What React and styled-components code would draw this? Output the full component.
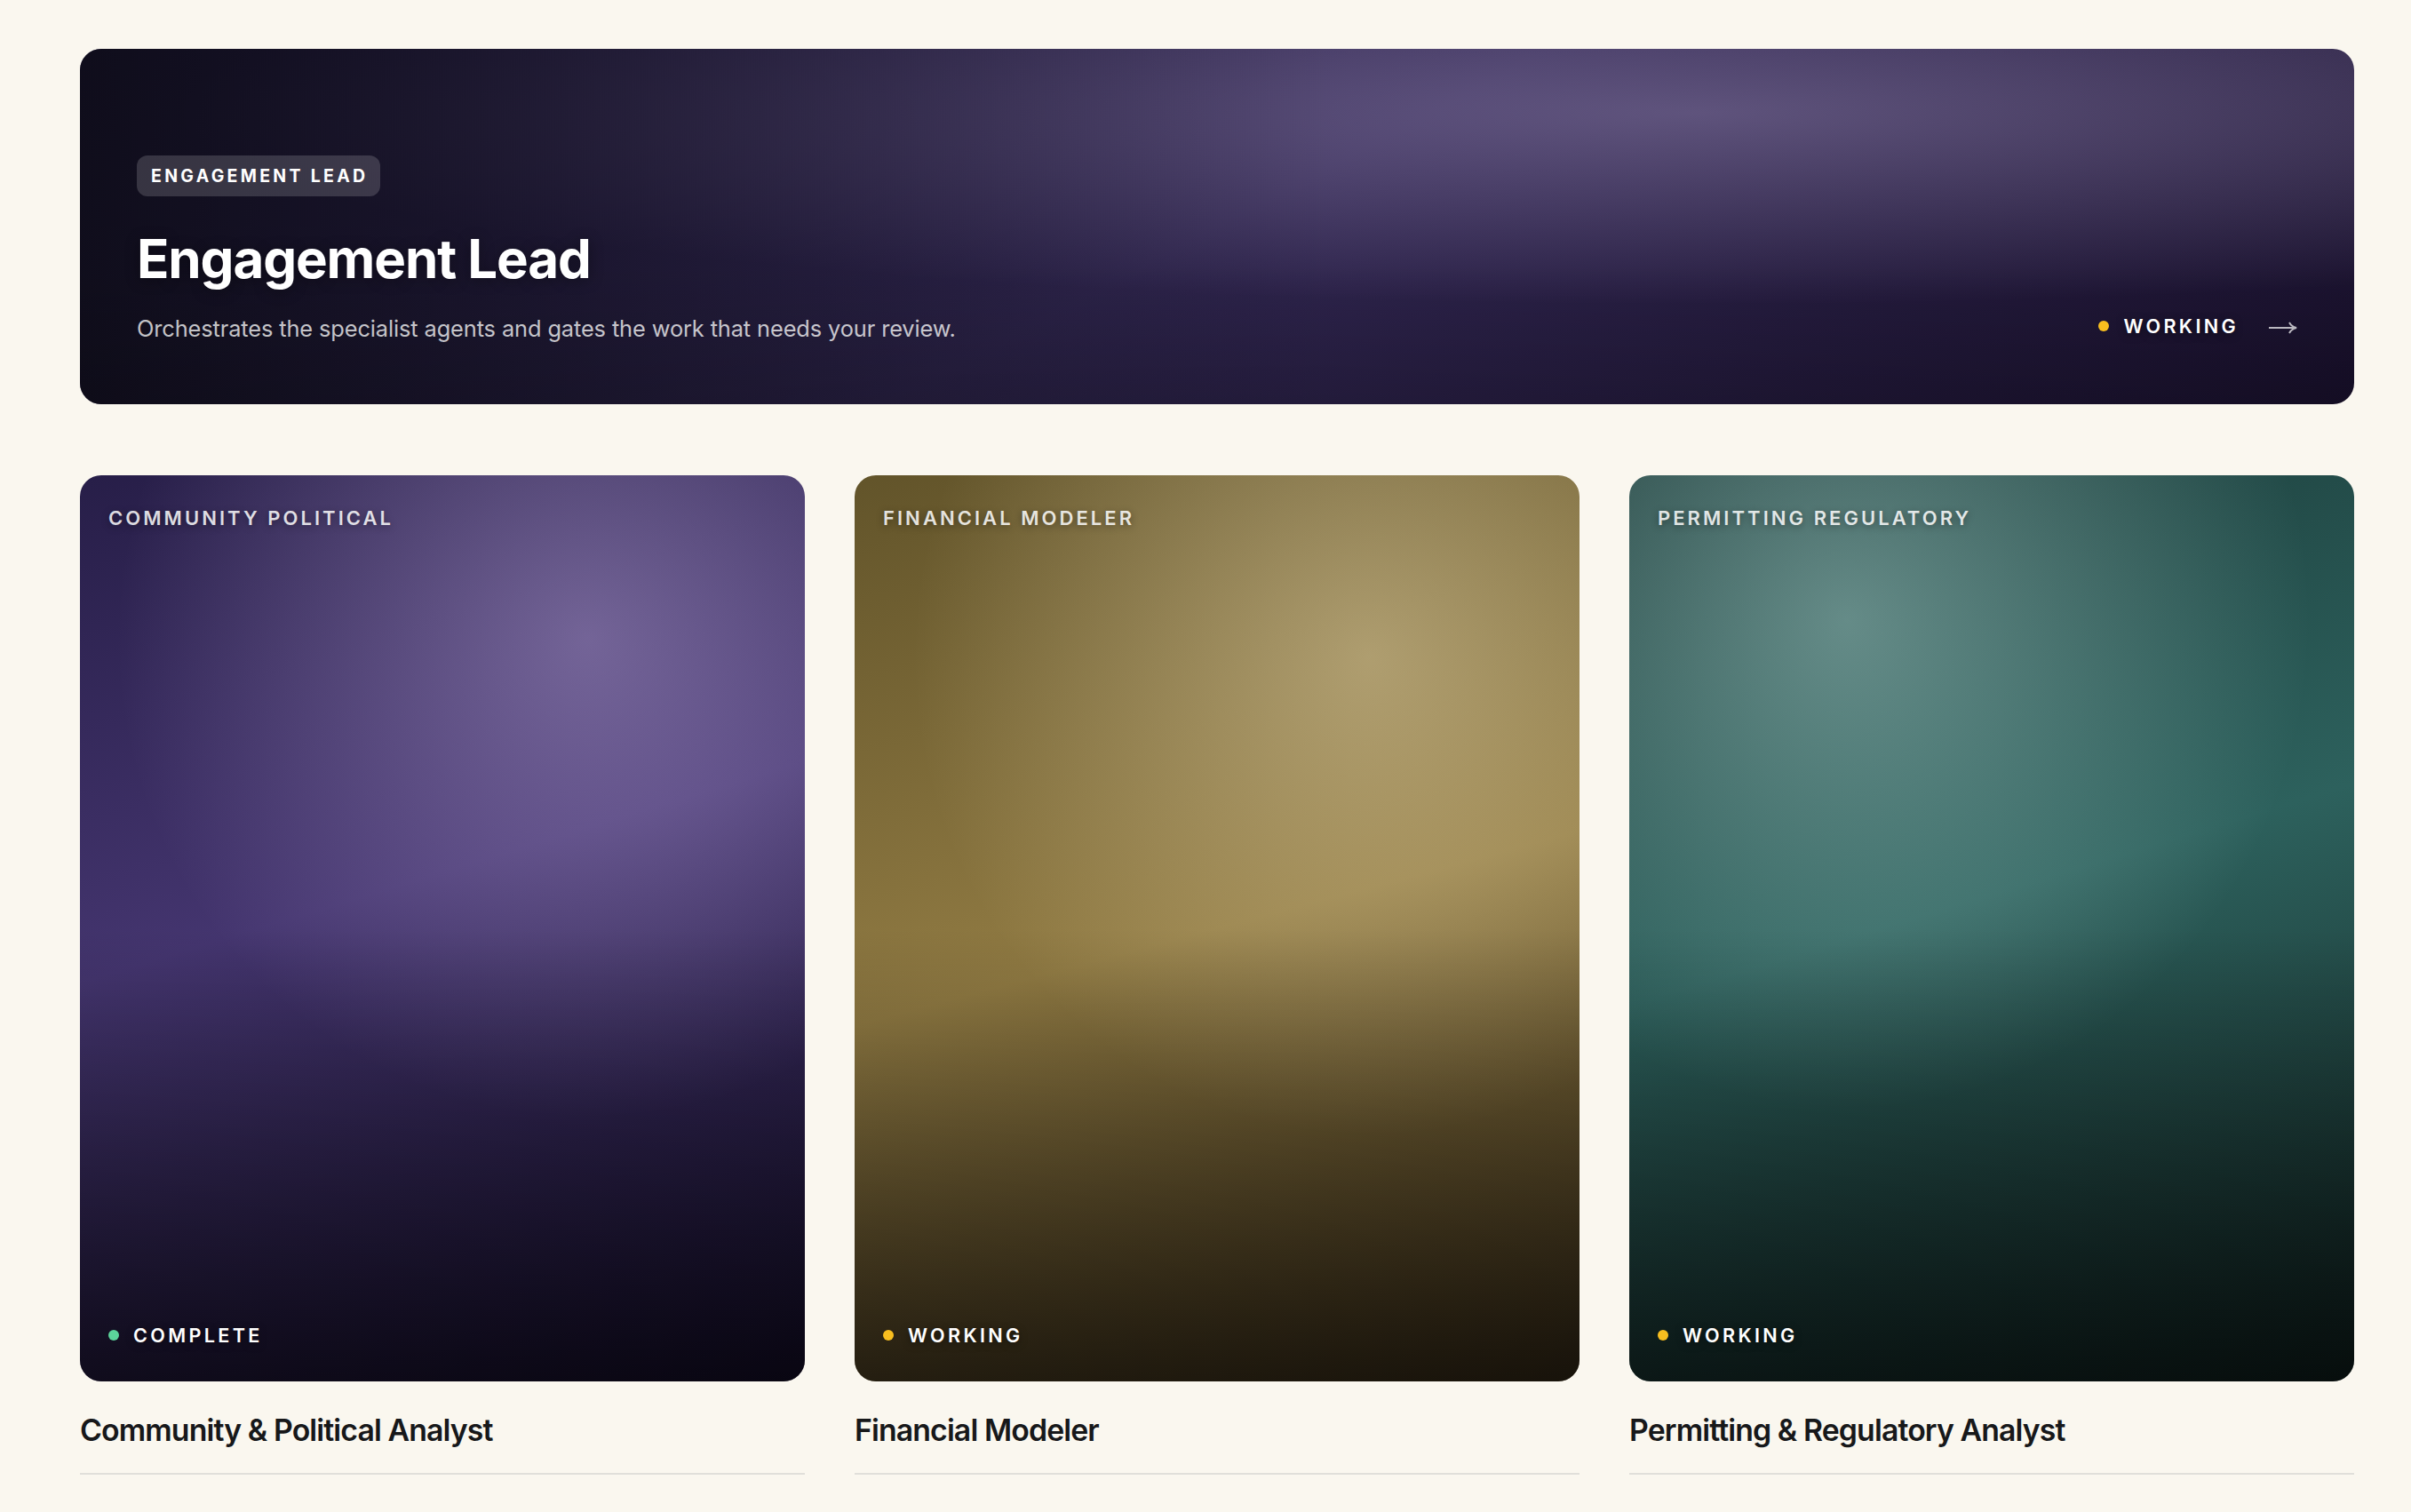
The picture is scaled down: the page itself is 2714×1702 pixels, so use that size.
import React from "react";
import styled, { createGlobalStyle, css } from "styled-components";

const GlobalStyle = createGlobalStyle`
    * {
        box-sizing: border-box;
    }

    body {
        margin: 0;
        background-color: #faf7ef;
        color: #17181a;
        font-family: Inter, "Liberation Sans", sans-serif;
        -webkit-font-smoothing: antialiased;
    }
`

const palettes = {
    lead: {
        base: '152deg, #261d46 0%, #302650 50%, #170f29 100%',
        glow: '71% 18%',
        size: '67% 54%',
        light: '190, 175, 220',
        strength: 0.35,
    },
    violet: {
        base: '163deg, #271e48 0%, #44356f 45%, #150e2a 100%',
        glow: '70% 18%',
        size: '65% 53%',
        light: '215, 195, 245',
        strength: 0.37,
    },
    gold: {
        base: '165deg, #62542a 0%, #917b43 50%, #372b18 100%',
        glow: '71% 20%',
        size: '63% 53%',
        light: '245, 230, 190',
        strength: 0.41,
    },
    teal: {
        base: '163deg, #1c3d3b 0%, #2d615d 47%, #10201e 100%',
        glow: '30% 16%',
        size: '64% 54%',
        light: '205, 240, 235',
        strength: 0.39,
    },
}

const artwork = css`
    background:
        radial-gradient(ellipse ${pr => palettes[pr.$tone].size} at ${pr => palettes[pr.$tone].glow}, rgba(${pr => palettes[pr.$tone].light}, ${pr => palettes[pr.$tone].strength}), rgba(${pr => palettes[pr.$tone].light}, 0)),
        linear-gradient(${pr => palettes[pr.$tone].base});
`

const Page = styled.main`
    padding: 55px 64px 42px 90px;
`

const HeroCard = styled.section`
    ${artwork}
    height: 400px;
    border-radius: 24px;
    overflow: hidden;
`

const HeroShade = styled.div`
    height: 100%;
    padding: 0 64px;
    display: flex;
    justify-content: space-between;
    align-items: center;
    background:
        linear-gradient(180deg, rgba(0, 0, 0, 0) 60%, rgba(0, 0, 0, 0.15) 100%),
        linear-gradient(90deg, rgba(8, 8, 14, 0.76) 0%, rgba(8, 8, 14, 0) 55%);
`

const HeroText = styled.div`
    display: flex;
    flex-direction: column;
    align-items: flex-start;
    padding-top: 52px;
`

const Badge = styled.span`
    height: 46px;
    padding: 0 14px 0 16px;
    line-height: 46px;
    border-radius: 12px;
    background-color: rgba(255, 255, 255, 0.16);
    color: #fff;
    font-size: 19.5px;
    font-weight: 700;
    letter-spacing: 3.3px;
    text-transform: uppercase;
`

const HeroTitle = styled.h1`
    margin: 34px 0 0;
    color: #fff;
    font-size: 60px;
    line-height: 72px;
    font-weight: 700;
    letter-spacing: -1.1px;
    text-shadow: 0 2px 16px rgba(0, 0, 0, 0.4);
`

const HeroDescription = styled.p`
    margin: 25px 0 0;
    color: rgba(255, 255, 255, 0.75);
    font-size: 25.4px;
    line-height: 36px;
    letter-spacing: -0.12px;
`

const HeroAside = styled.div`
    display: flex;
    align-items: center;
    gap: 33px;
    padding-top: 223px;
`

const Status = styled.span`
    display: flex;
    align-items: center;
    gap: 16px;
    color: #fff;
    font-size: 21.6px;
    line-height: 28px;
    font-weight: 600;
    letter-spacing: 3.35px;
    text-transform: uppercase;
    text-shadow: 0 2px 8px rgba(0, 0, 0, 0.5);
`

const Dot = styled.i`
    width: 12px;
    height: 12px;
    border-radius: 50%;
    background-color: ${pr => pr.$done ? '#5bd49a' : '#f8be1f'};
`

const Arrow = styled.svg`
    width: 33px;
    height: 16px;
    margin-top: 4px;
    fill: none;
    stroke: rgba(255, 255, 255, 0.7);
    stroke-width: 2;
`

const Grid = styled.section`
    display: grid;
    grid-template-columns: repeat(3, 1fr);
    gap: 56px;
    margin-top: 80px;
`

const Agent = styled.article`
    border-bottom: 2px solid #e0dfda;
`

const Poster = styled.div`
    ${artwork}
    height: 1020px;
    border-radius: 24px;
    overflow: hidden;
`

const PosterShade = styled.div`
    height: 100%;
    padding: 34px 32px 38px;
    display: flex;
    flex-direction: column;
    justify-content: space-between;
    background: linear-gradient(180deg, rgba(0, 0, 0, 0) 50%, rgba(0, 0, 0, 0.58) 100%);
`

const PosterLabel = styled.span`
    color: rgba(255, 255, 255, 0.85);
    font-size: 22px;
    line-height: 28px;
    font-weight: 600;
    letter-spacing: 3.05px;
    text-transform: uppercase;
    text-shadow: 0 2px 8px rgba(0, 0, 0, 0.4);
`

const AgentName = styled.h2`
    margin: 34px 0 27px;
    font-size: 33.8px;
    line-height: 42px;
    font-weight: 600;
    letter-spacing: -0.88px;
`

const agents = [
    { tone: 'violet', label: 'Community Political', name: 'Community & Political Analyst', status: 'Complete' },
    { tone: 'gold', label: 'Financial Modeler', name: 'Financial Modeler', status: 'Working' },
    { tone: 'teal', label: 'Permitting Regulatory', name: 'Permitting & Regulatory Analyst', status: 'Working' },
]

function AgentStatus({ status }) {
    return (
        <Status>
            <Dot $done={status === 'Complete'} />
            {status}
        </Status>
    )
}

function Hero() {
    return (
        <HeroCard $tone="lead">
            <HeroShade>
                <HeroText>
                    <Badge>Engagement Lead</Badge>
                    <HeroTitle>Engagement Lead</HeroTitle>
                    <HeroDescription>Orchestrates the specialist agents and gates the work that needs your review.</HeroDescription>
                </HeroText>
                <HeroAside>
                    <AgentStatus status="Working" />
                    <Arrow viewBox="0 0 33 16">
                        <path d="M1 8h31M24 2c1.500 3 4 5 8 6c-4 1-6.500 3-8 6" />
                    </Arrow>
                </HeroAside>
            </HeroShade>
        </HeroCard>
    )
}

function App() {
    return (
        <Page>
            <GlobalStyle />
            <Hero />
            <Grid>
                {agents.map(agent => (
                    <Agent key={agent.name}>
                        <Poster $tone={agent.tone}>
                            <PosterShade>
                                <PosterLabel>{agent.label}</PosterLabel>
                                <AgentStatus status={agent.status} />
                            </PosterShade>
                        </Poster>
                        <AgentName>{agent.name}</AgentName>
                    </Agent>
                ))}
            </Grid>
        </Page>
    )
}

export default App;
